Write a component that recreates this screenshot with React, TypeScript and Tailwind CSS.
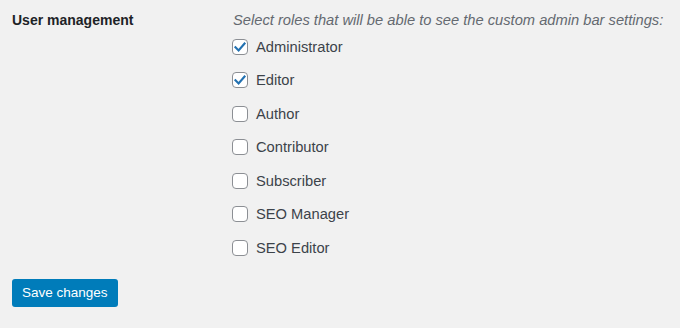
import React, { useState } from 'react'

const ROLES = ['Administrator', 'Editor', 'Author', 'Contributor', 'Subscriber', 'SEO Manager', 'SEO Editor']

function Checkbox({ checked, onChange }: { checked: boolean; onChange: () => void }) {
  return (
    <button
      type="button"
      role="checkbox"
      aria-checked={checked}
      onClick={onChange}
      className="w-4 h-4 shrink-0 rounded-[4px] border border-[#8c8f94] bg-white flex items-center justify-center"
    >
      {checked && (
        <svg width="14" height="14" viewBox="0 0 20 20" className="text-[#2271b1]">
          <path d="M3.5 10.5l4.5 4.5 8.5-10" fill="none" stroke="currentColor" strokeWidth="3" strokeLinecap="square" />
        </svg>
      )}
    </button>
  )
}

export default function App() {
  const [roles, setRoles] = useState<Record<string, boolean>>({ Administrator: true, Editor: true })

  return (
    <div className="min-h-screen w-full bg-[#f1f1f1] px-3 pt-[10px] font-['Liberation_Sans',Arial,sans-serif] text-[14px]">
      <div className="flex">
        <div className="w-[220px] shrink-0 font-bold leading-5 text-[#1d2327]">User management</div>
        <div>
          <p className="italic leading-5 text-[14.7px] whitespace-nowrap text-[#646970] pl-px">
            Select roles that will be able to see the custom admin bar settings:
          </p>
          <div className="flex flex-col">
            {ROLES.map((r) => (
              <label key={r} className="h-[33.5px] flex items-center gap-2 text-[14.7px] text-[#3c434a] cursor-pointer">
                <Checkbox checked={!!roles[r]} onChange={() => setRoles({ ...roles, [r]: !roles[r] })} />
                <span>{r}</span>
              </label>
            ))}
          </div>
        </div>
      </div>
      <button className="mt-[14px] h-7 px-[10px] rounded-[3px] bg-[#007cba] text-white text-[13.5px] leading-7">
        Save changes
      </button>
    </div>
  )
}
